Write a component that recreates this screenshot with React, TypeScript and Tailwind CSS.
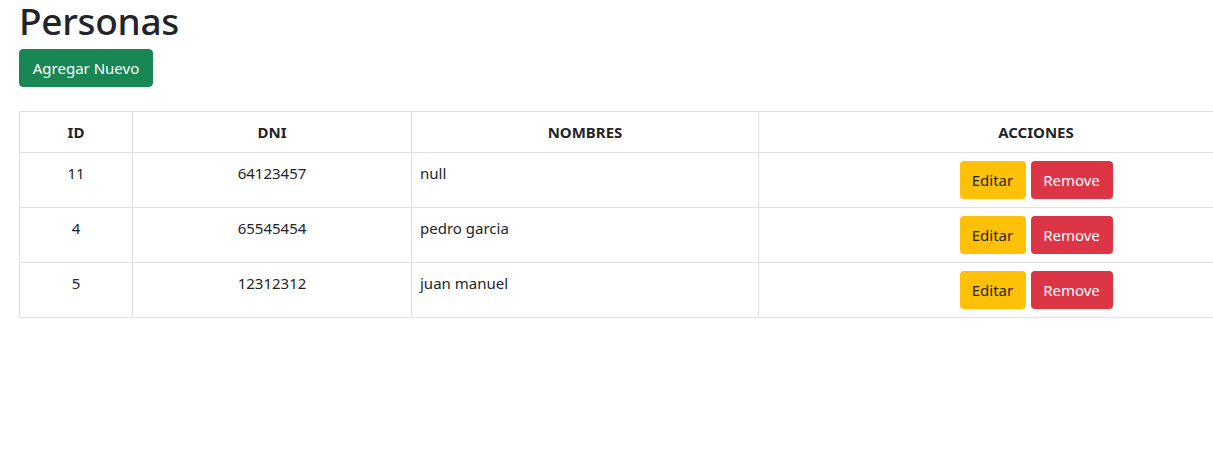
import React from 'react';

interface Persona {
  id: number;
  dni: string;
  nombres: string;
}

const personas: Persona[] = [
  { id: 11, dni: '64123457', nombres: 'null' },
  { id: 4, dni: '65545454', nombres: 'pedro garcia' },
  { id: 5, dni: '12312312', nombres: 'juan manuel' },
];

const App: React.FC = () => {
  return (
    <div
      className="min-h-screen w-full overflow-hidden bg-white text-[#212529]"
      style={{ fontFamily: '"Noto Sans", "Open Sans", sans-serif' }}
    >
      <div className="px-[19px]">
        <h1 className="text-[37px] font-medium leading-[40px] mt-[1px] mb-[8px] tracking-[-0.3px]">Personas</h1>
        <button className="bg-[#198754] text-white text-[15px] leading-[24px] w-[134px] h-[38px] rounded-[4px] border border-[#198754]">
          Agregar Nuevo
        </button>

        <table className="w-[1295px] mt-[24px] border-collapse text-[15px] leading-[24px]">
          <thead>
            <tr>
              <th className="w-[113px] border border-[#dee2e6] p-[8px] font-bold text-center">ID</th>
              <th className="w-[279px] border border-[#dee2e6] p-[8px] font-bold text-center">DNI</th>
              <th className="w-[347px] border border-[#dee2e6] p-[8px] font-bold text-center">NOMBRES</th>
              <th className="border border-[#dee2e6] p-[8px] font-bold text-center">ACCIONES</th>
            </tr>
          </thead>
          <tbody>
            {personas.map((p) => (
              <tr key={p.id}>
                <td className="border border-[#dee2e6] p-[8px] text-center align-top">{p.id}</td>
                <td className="border border-[#dee2e6] p-[8px] text-center align-top">{p.dni}</td>
                <td className="border border-[#dee2e6] p-[8px] align-top">{p.nombres}</td>
                <td className="border border-[#dee2e6] p-[8px] align-top">
                  <div className="flex justify-center gap-[5px]">
                    <button className="bg-[#ffc107] text-[#212529] h-[38px] w-[66px] rounded-[4px] text-[15px]">
                      Editar
                    </button>
                    <button className="bg-[#dc3545] text-white h-[38px] w-[82px] rounded-[4px] text-[15px]">
                      Remove
                    </button>
                  </div>
                </td>
              </tr>
            ))}
          </tbody>
        </table>
      </div>
    </div>
  );
};

export default App;
